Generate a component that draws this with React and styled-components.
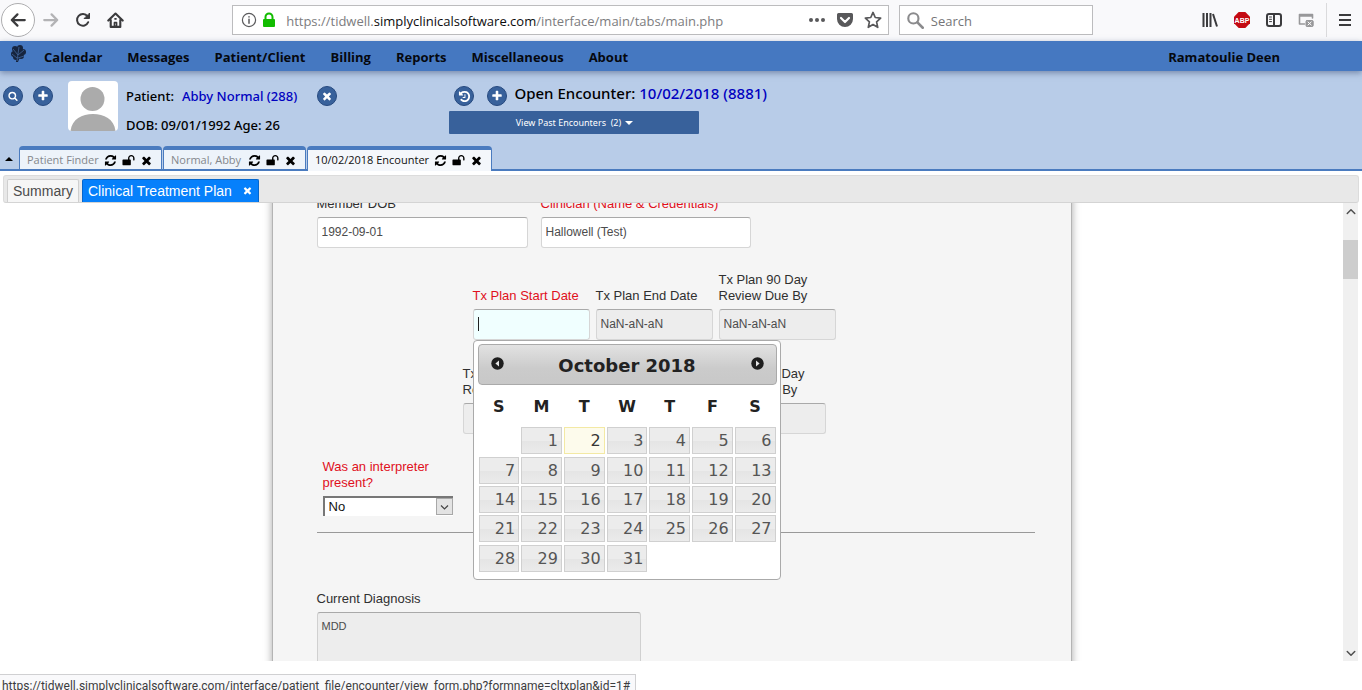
import React from "react";
import styled, { createGlobalStyle } from "styled-components";

const UI = `"Open Sans", "Noto Sans", sans-serif`;
const UI_MEDIUM = `"Noto Sans", "Open Sans", sans-serif`;
const UI_SMALL = `Roboto, "Open Sans", sans-serif`;
const ARIAL = `"Liberation Sans", Arial, sans-serif`;
const VERDANA = `"DejaVu Sans", Verdana, sans-serif`;

const Global = createGlobalStyle`
  * { box-sizing: border-box; }
  html, body { margin: 0; padding: 0; background: #fff; }
  button { margin: 0; padding: 0; border: 0; background: none; font: inherit; color: inherit; cursor: pointer; }
  a { text-decoration: none; }
  svg { display: block; }
`;

const Page = styled.div`
  display: flex;
  flex-direction: column;
  height: 100vh;
  overflow: hidden;
  font-family: ${UI};
`;

/* Browser toolbar */

const Toolbar = styled.div`
  flex: none;
  display: flex;
  align-items: center;
  height: 41px;
  padding: 0 1px 1px;
  background: #f9f9fb;
`;

const IconButton = styled.button`
  flex: none;
  display: flex;
  align-items: center;
  justify-content: center;
  width: 32px;
  height: 32px;
  color: ${(p) => p.$color || "#3b3b3d"};
`;

const BackButton = styled(IconButton)`
  width: 34px;
  height: 34px;
  border: 1px solid #aeaeb0;
  border-radius: 50%;
  background: #fff;
`;

const Spacer = styled.div`
  flex: 3 1 0;
`;

const UrlBox = styled.div`
  flex: 19 1 0;
  display: flex;
  align-items: center;
  gap: 5px;
  min-width: 0;
  height: 30px;
  padding: 0 6px 0 8px;
  border: 1px solid #bcbcbe;
  background: #fff;
`;

const UrlText = styled.div`
  flex: 1;
  margin-left: 5px;
  padding-top: 2px;
  min-width: 0;
  overflow: hidden;
  white-space: nowrap;
  font-size: 13px;
  line-height: 20px;
  color: #7c7c7e;
  outline: none;
  b { font-weight: 400; color: #0c0c0d; }
`;

const UrlActions = styled.div`
  display: flex;
  align-items: center;
  gap: 10px;
  color: #58585a;
`;

const SearchBox = styled.label`
  flex: none;
  display: flex;
  align-items: center;
  gap: 7px;
  width: 194px;
  height: 30px;
  margin-left: 10px;
  padding-left: 7px;
  border: 1px solid #bcbcbe;
  background: #fff;
  color: #8b8b8d;
  input {
    flex: 1;
    min-width: 0;
    padding: 2px 0 0;
    border: 0;
    outline: 0;
    background: none;
    font: 13px/20px ${UI};
    &::placeholder { color: #757577; opacity: 1; }
  }
`;

const MenuDivider = styled.div`
  width: 1px;
  height: 34px;
  margin: 0 2px 0 4px;
  background: #dadadc;
`;

/* Application menu */

const NavBar = styled.nav`
  flex: none;
  position: relative;
  display: flex;
  align-items: center;
  gap: 25px;
  height: 30px;
  padding: 2px 82px 0 10px;
  background: #4578c1;
  box-shadow: 0 2px 6px rgba(50, 70, 110, 0.5);
  font-size: 13px;
  font-weight: 700;
  line-height: 20px;
  color: #05080f;
`;

const NavLink = styled.a`
  color: inherit;
`;

const Brand = styled.a`
  margin: -6px -7px 0 0;
`;

const UserName = styled.button`
  margin-left: auto;
`;

/* Patient band */

const Band = styled.section`
  flex: none;
  display: flex;
  height: 75px;
  padding-top: 10px;
  background: #b8cce8;
  font-family: ${UI_MEDIUM};
  font-size: 13px;
  font-weight: 500;
  color: #000;
`;

const PatientBlock = styled.div`
  flex: none;
  display: flex;
  align-items: flex-start;
  width: 33%;
  padding: 0 0 0 3px;
`;

const RoundButton = styled.button`
  flex: none;
  display: flex;
  align-items: center;
  justify-content: center;
  width: 20px;
  height: 20px;
  border: 1px solid #26497f;
  border-radius: 50%;
  background: #38619b;
  color: #fff;
`;

const Finder = styled.div`
  display: flex;
  gap: 10px;
  margin: 5px 15px 0 0;
`;

const Avatar = styled.svg`
  flex: none;
  width: 50px;
  height: 50px;
  margin-right: 8px;
  border-radius: 4px;
`;

const PatientText = styled.div`
  display: flex;
  flex-direction: column;
  gap: 9px;
  padding-top: 5px;
  line-height: 20px;
  white-space: nowrap;
`;

const TextRow = styled.div`
  display: flex;
  align-items: center;
  height: 20px;
`;

const RecordLink = styled.a`
  margin: 0 20px 0 8px;
  color: #0000c0;
`;

const EncounterBlock = styled.div`
  display: flex;
  flex-direction: column;
  gap: 5px;
  width: 250px;
  padding-top: 5px;
  white-space: nowrap;
`;

const EncounterRow = styled(TextRow)`
  gap: 13px;
  padding-left: 5px;
  font-size: 15px;
`;

const EncounterTitle = styled.div`
  margin: -6px 0 0 -6px;
  a { color: #0000c0; }
`;

const PastButton = styled.button`
  display: flex;
  align-items: center;
  justify-content: center;
  gap: 4px;
  height: 23px;
  border-radius: 1px;
  background: #38619b;
  color: #fff;
  font-size: 9px;
  font-weight: 400;
`;

/* Work tabs */

const TabStrip = styled.div`
  flex: none;
  display: flex;
  gap: 1px;
  height: 25px;
  background: linear-gradient(#4a7bbf, #4a7bbf) 0 100% / 100% 2px no-repeat #b8cce8;
`;

const Collapse = styled.button`
  width: 18px;
  padding-left: 5px;
`;

const WorkTab = styled.div`
  display: flex;
  align-items: center;
  gap: 5px;
  min-width: 143px;
  height: ${(p) => (p.$active ? 25 : 23)}px;
  padding: 1px 8px ${(p) => (p.$active ? 2 : 0)}px 7px;
  border: 1px solid #4a7bbf;
  border-top-width: 4px;
  border-bottom: 0;
  border-radius: 4px 4px 0 0;
  background: ${(p) => (p.$active ? "#f4f7fb" : "#edf3fa")};
  font-size: 11px;
  line-height: 16px;
  color: #000;
  span { flex: 1; color: ${(p) => (p.$active ? "#111" : "#84878c")}; }
`;

/* Encounter tabs */

const FormTabs = styled.div`
  flex: none;
  display: flex;
  align-items: flex-end;
  gap: 3px;
  height: 28px;
  margin: 4px 3px 0;
  padding-left: 3px;
  border: 1px solid #dcdcdc;
  border-bottom-color: #d4d4d4;
  border-radius: 3px;
  background: #e8e8e8;
  font-family: ${ARIAL};
  font-size: 14px;
`;

const FormTab = styled.button`
  display: flex;
  align-items: center;
  gap: 10px;
  height: 23px;
  padding: 0 5px 1px;
  border: 1px solid ${(p) => (p.$active ? "#0566cc" : "#cfcfcf")};
  border-bottom: 0;
  border-radius: 2px 2px 0 0;
  background: ${(p) => (p.$active ? "#0680fb" : "#f6f6f6")};
  color: ${(p) => (p.$active ? "#fff" : "#4b4b4b")};
`;

/* Scrolled form */

const Viewport = styled.main`
  flex: 1;
  display: flex;
  min-height: 0;
  margin-right: 4px;
  overflow: hidden;
  font-family: ${ARIAL};
`;

const Canvas = styled.div`
  flex: 1;
  min-width: 0;
  overflow: hidden;
`;

const Sheet = styled.form`
  max-width: 800px;
  min-height: 600px;
  margin: -8px auto 0;
  padding: 0 36px 0 44px;
  border: 1px solid #b4b4b4;
  background: #f5f5f5;
  box-shadow: 0 0 8px rgba(0, 0, 0, 0.35);
`;

const FieldRow = styled.div`
  display: flex;
  align-items: flex-end;
  gap: ${(p) => p.$gap || 6}px;
  margin: ${(p) => p.$top || 0}px 0 0 ${(p) => p.$left || 0}px;
`;

const Field = styled.div`
  position: relative;
  display: flex;
  flex-direction: column;
  gap: 5px;
  width: ${(p) => p.$width || 117}px;
`;

const Label = styled.label`
  font-size: 13px;
  line-height: 16px;
  color: ${(p) => (p.$required ? "#e0101c" : "#303030")};
`;

const Input = styled.input`
  width: 100%;
  height: 31px;
  padding: 0 4px 2px;
  border: 1px solid #d6d6d6;
  border-top-color: #a9a9a9;
  border-radius: 3px;
  outline: 0;
  background: ${(p) => (p.$focus ? "#f0ffff" : p.readOnly ? "#ededed" : "#fff")};
  color: #4c4c4c;
  font: 12px/16px ${ARIAL};
`;

const Caret = styled.span`
  position: absolute;
  left: 5px;
  bottom: 9px;
  width: 1px;
  height: 14px;
  background: #222;
`;

const SelectWrap = styled.div`
  position: relative;
  width: 130px;
  select {
    appearance: none;
    width: 100%;
    height: 20px;
    padding: 0 20px 1px 4px;
    border: 0 solid #777;
    border-width: 2px 0 0 2px;
    border-radius: 0;
    background: #fff;
    color: #111;
    font: 13px/16px ${ARIAL};
  }
  svg {
    position: absolute;
    top: 2px;
    right: 0;
    pointer-events: none;
  }
`;

const Rule = styled.hr`
  height: 1px;
  margin: 16px 0 58px;
  border: 0;
  background: #999;
`;

const Notes = styled.textarea`
  width: 324px;
  height: 100px;
  padding: 6px 4px;
  border: 1px solid #d0d0d0;
  border-top-color: #a9a9a9;
  border-radius: 3px;
  background: #ededed;
  color: #4c4c4c;
  font: 11px/14px ${ARIAL};
  resize: none;
`;

const ScrollBar = styled.div`
  flex: none;
  display: flex;
  flex-direction: column;
  width: 15px;
  background: #f0f0f0;
`;

const ScrollArrow = styled.button`
  display: flex;
  align-items: center;
  justify-content: center;
  height: 17px;
  color: #505050;
`;

const ScrollThumb = styled.div`
  height: 39px;
  margin: 20px 0 auto;
  background: #cdcdcd;
`;

/* Date picker */

const Picker = styled.div`
  position: absolute;
  z-index: 5;
  top: 100%;
  left: 0;
  width: 308px;
  height: 240px;
  padding: 3px 3px 0 4px;
  border: 1px solid #aaa;
  border-radius: 4px;
  background: #fff;
  font-family: ${VERDANA};
  color: #222;
`;

const PickerHead = styled.div`
  display: flex;
  align-items: center;
  justify-content: space-between;
  height: 41px;
  padding: 1px 12px 0;
  border: 1px solid #aaa;
  border-radius: 4px;
  background: linear-gradient(#e2e2e2, #cbcbcb 60%, #c8c8c8);
  font-size: 18px;
  font-weight: 700;
  button { margin-bottom: 4px; }
`;

const Days = styled.table`
  width: 100%;
  height: 188px;
  border-collapse: collapse;
  table-layout: fixed;
  font-size: 16px;
  th {
    height: 41px;
    padding: 1px 0 0;
    font-weight: 700;
  }
  td { height: 29px; padding: 1px; }
`;

const Day = styled.a`
  display: block;
  height: 27px;
  padding-right: 3px;
  border: 1px solid ${(p) => (p.$today ? "#f3e9a4" : "#d0d0d0")};
  background: ${(p) => (p.$today ? "#fdfbec" : "linear-gradient(#ececec 50%, #e5e5e5 52%, #ebebeb)")};
  color: ${(p) => (p.$today ? "#363636" : "#555")};
  line-height: 26px;
  text-align: right;
`;

/* Link preview at the foot of the window */

const StatusBar = styled.div`
  flex: none;
  align-self: flex-start;
  height: 16px;
  margin-top: 13px;
  padding: 1px 5px 0 2px;
  overflow: hidden;
  border: 1px solid #d0d0d2;
  border-width: 1px 1px 0 0;
  background: #f9f9fb;
  color: #3c3c3e;
  font-family: ${UI_SMALL};
  font-size: 12px;
  line-height: 20px;
  white-space: nowrap;
`;

const FA = {
  times: "M1490 1322q0 40-28 68l-136 136q-28 28-68 28t-68-28l-294-294-294 294q-28 28-68 28t-68-28l-136-136q-28-28-28-68t28-68l294-294-294-294q-28-28-28-68t28-68l136-136q28-28 68-28t68 28l294 294 294-294q28-28 68-28t68 28l136 136q28 28 28 68t-28 68l-294 294 294 294q28 28 28 68z",
  plus: "M1600 736v192q0 40-28 68t-68 28h-416v416q0 40-28 68t-68 28h-192q-40 0-68-28t-28-68v-416h-416q-40 0-68-28t-28-68v-192q0-40 28-68t68-28h416v-416q0-40 28-68t68-28h192q40 0 68 28t28 68v416h416q40 0 68 28t28 68z",
  search: "M1216 832q0-185-131.5-316.5t-316.5-131.5-316.5 131.5-131.5 316.5 131.5 316.5 316.5 131.5 316.5-131.5 131.5-316.5zm512 832q0 52-38 90t-90 38q-54 0-90-38l-343-342q-179 124-399 124-143 0-273.5-55.5t-225-150-150-225-55.5-273.5 55.5-273.5 150-225 225-150 273.5-55.5 273.5 55.5 225 150 150 225 55.5 273.5q0 220-124 399l343 343q37 37 37 90z",
  refresh: "M1639 1056q0 5-1 7-64 268-268 434.5t-478 166.5q-146 0-282.5-55t-243.5-157l-129 129q-19 19-45 19t-45-19-19-45v-448q0-26 19-45t45-19h448q26 0 45 19t19 45-19 45l-137 137q71 66 161 102t187 36q134 0 250-65t186-179q11-17 53-117 8-23 30-23h192q13 0 22.5 9.5t9.5 22.5zm25-800v448q0 26-19 45t-45 19h-448q-26 0-45-19t-19-45 19-45l138-138q-148-137-349-137-134 0-250 65t-186 179q-11 17-53 117-8 23-30 23h-199q-13 0-22.5-9.5t-9.5-22.5v-7q65-268 270-434.5t480-166.5q146 0 284 55.5t245 156.5l130-129q19-19 45-19t45 19 19 45z",
  unlock: "M1728 576v256q0 26-19 45t-45 19h-64q-26 0-45-19t-19-45v-256q0-106-75-181t-181-75-181 75-75 181v192h96q40 0 68 28t28 68v576q0 40-28 68t-68 28h-960q-40 0-68-28t-28-68v-576q0-40 28-68t68-28h672v-192q0-185 131.5-316.5t316.5-131.5 316.5 131.5 131.5 316.5z",
  history: "M1664 896q0 156-61 298t-164 245-245 164-298 61q-172 0-327-72.5t-264-204.5q-7-10-6.5-22.5t8.5-20.5l137-138q10-9 25-9 16 2 23 12 73 95 179 147t225 52q104 0 198.5-40.5t163.5-109.5 109.5-163.5 40.5-198.5-40.5-198.5-109.5-163.5-163.5-109.5-198.5-40.5q-98 0-188 35.5t-160 101.5l137 138q31 30 14 69-17 40-59 40h-448q-26 0-45-19t-19-45v-448q0-42 40-59 39-17 69 14l130 129q107-101 244.5-156.5t284.5-55.5q156 0 298 61t245 164 164 245 61 298zm-640-288v448q0 14-9 23t-23 9h-320q-14 0-23-9t-9-23v-64q0-14 9-23t23-9h224v-352q0-14 9-23t23-9h64q14 0 23 9t9 23z",
};

const Glyph = ({ name, size = 12 }) => (
  <svg width={size} height={size} viewBox="0 0 1792 1792" fill="currentColor" aria-hidden="true">
    <path d={FA[name]} />
  </svg>
);

const Line = ({ size = 16, width = 2, children, ...rest }) => (
  <svg width={size} height={size} viewBox="0 0 16 16" fill="none" stroke="currentColor" strokeWidth={width}
    strokeLinecap="round" strokeLinejoin="round" aria-hidden="true" {...rest}>
    {children}
  </svg>
);

const Tab = ({ title, active }) => (
  <WorkTab $active={active}>
    <span>{title}</span>
    <button aria-label={`Refresh ${title}`}><Glyph name="refresh" size={13} /></button>
    <button aria-label={`Unlock ${title}`}><Glyph name="unlock" size={13} /></button>
    <button aria-label={`Close ${title}`}><Glyph name="times" size={13} /></button>
  </WorkTab>
);

const DateField = ({ id, label, name, value, required, focus, children }) => (
  <Field>
    {label && <Label htmlFor={id} $required={required}>{label}</Label>}
    <Input id={id} aria-label={name} defaultValue={value} readOnly={!focus} $focus={focus} />
    {children}
  </Field>
);

const WEEKS = [
  [null, 1, 2, 3, 4, 5, 6],
  [7, 8, 9, 10, 11, 12, 13],
  [14, 15, 16, 17, 18, 19, 20],
  [21, 22, 23, 24, 25, 26, 27],
  [28, 29, 30, 31, null, null, null],
];

const DatePicker = () => (
  <Picker>
    <PickerHead>
      <button type="button" aria-label="Previous month">
        <svg width="13" height="13" viewBox="0 0 13 13"><circle cx="6.5" cy="6.5" r="6.2" fill="#1e1e1e" /><path d="M8 3.4v6.2L4.4 6.5z" fill="#e4e4e4" /></svg>
      </button>
      <span>October 2018</span>
      <button type="button" aria-label="Next month">
        <svg width="13" height="13" viewBox="0 0 13 13"><circle cx="6.5" cy="6.5" r="6.2" fill="#1e1e1e" /><path d="M5 3.4v6.2l3.6-3.1z" fill="#e4e4e4" /></svg>
      </button>
    </PickerHead>
    <Days>
      <thead>
        <tr>{["S", "M", "T", "W", "T", "F", "S"].map((d, i) => <th key={i} scope="col">{d}</th>)}</tr>
      </thead>
      <tbody>
        {WEEKS.map((week, i) => (
          <tr key={i}>
            {week.map((day, j) => <td key={j}>{day && <Day href="#" $today={day === 2}>{day}</Day>}</td>)}
          </tr>
        ))}
      </tbody>
    </Days>
  </Picker>
);

export default function App() {
  return (
    <Page>
      <Global />
      <Toolbar>
        <BackButton aria-label="Back"><Line size={18}><path d="M14 8H2.500M7.500 3L2.500 8l5 5" /></Line></BackButton>
        <IconButton aria-label="Forward" $color="#b3b3b5"><Line size={18}><path d="M2 8h11.500M8.500 3l5 5-5 5" /></Line></IconButton>
        <IconButton aria-label="Reload">
          <Line><path d="M13.200 10.200A5.800 5.800 0 1 1 12.500 4.400" /><path d="M14.500 1.500v5h-5z" fill="currentColor" strokeWidth="1" /></Line>
        </IconButton>
        <IconButton aria-label="Home">
          <Line size={17}><path d="M1.200 8L8 1.500 14.800 8M3.500 7.500V14h9V7.500" /><path d="M7 13.500V10h2v3.500zM7.500 6.500h1" strokeWidth="1.500" /></Line>
        </IconButton>
        <Spacer />
        <UrlBox>
          <Line width={1.2} style={{ color: "#5a5a5c" }}><circle cx="8" cy="8" r="6.600" /><path d="M8 7.300v4M8 4.800v.2" strokeWidth="1.500" /></Line>
          <svg width="14" height="16" viewBox="0 0 14 16" aria-hidden="true">
            <rect x="1" y="7" width="12" height="8" rx="1" fill="#12bc00" />
            <path d="M3.500 8V5a3.500 3.500 0 0 1 7 0v3" fill="none" stroke="#12bc00" strokeWidth="2" />
          </svg>
          <UrlText role="textbox" aria-label="Address" contentEditable suppressContentEditableWarning spellCheck={false}>
            https://tidwell.<b>simplyclinicalsoftware.com</b>/interface/main/tabs/main.php
          </UrlText>
          <UrlActions>
            <button aria-label="Page actions">
              <svg width="18" height="16" viewBox="0 0 18 16" fill="currentColor"><circle cx="3" cy="8" r="2" /><circle cx="9" cy="8" r="2" /><circle cx="15" cy="8" r="2" /></svg>
            </button>
            <button aria-label="Save to Pocket">
              <svg width="18" height="16" viewBox="0 0 18 16"><path d="M2.500 1h13A1.500 1.500 0 0 1 17 2.500V7a8 8 0 0 1-16 0V2.500A1.500 1.500 0 0 1 2.500 1z" fill="#58585a" /><path d="M5 6l4 4 4-4" fill="none" stroke="#fff" strokeWidth="2.200" strokeLinecap="round" strokeLinejoin="round" /></svg>
            </button>
            <button aria-label="Bookmark">
              <Line size={18} width={1.5}><path d="M8 1.300l2 4.500 4.800.5-3.600 3.300 1 4.900L8 12l-4.200 2.500 1-4.900L1.200 6.300 6 5.800z" /></Line>
            </button>
          </UrlActions>
        </UrlBox>
        <SearchBox>
          <Line size={17}><circle cx="6" cy="6" r="4.800" /><path d="M9.800 9.800l5 5" strokeWidth="2.400" /></Line>
          <input type="text" placeholder="Search" aria-label="Search" />
        </SearchBox>
        <Spacer />
        <IconButton aria-label="Library">
          <Line width={2} strokeLinecap="butt"><path d="M1.500 1v14M5 1v14M8.500 1v14M11 2l4 12.500" /></Line>
        </IconButton>
        <IconButton aria-label="Adblock Plus">
          <svg width="16" height="16" viewBox="0 0 16 16">
            <path d="M4.700 0h6.600L16 4.700v6.600L11.300 16H4.700L0 11.300V4.700z" fill="#c40a12" />
            <text x="8" y="10.600" textAnchor="middle" fontSize="7" fontWeight="700" fontFamily="Liberation Sans, sans-serif" fill="#fff">ABP</text>
          </svg>
        </IconButton>
        <IconButton aria-label="Sidebars">
          <Line><rect x="1" y="2" width="14" height="12" rx="2" /><path d="M8 2v12" /><path d="M3.500 5h2M3.500 7.300h2M3.500 9.600h2" strokeWidth="1" /></Line>
        </IconButton>
        <IconButton aria-label="Clear session" $color="#98989a">
          <Line width={1.6}><path d="M6.500 12H1.500V2.500h13V6M1.500 4h13" /><rect x="8" y="8.500" width="7.200" height="6" rx="1" fill="currentColor" strokeWidth="1" /><path d="M10 10l3.200 3M13.200 10L10 13" stroke="#fff" strokeWidth="1" /></Line>
        </IconButton>
        <MenuDivider />
        <IconButton aria-label="Menu"><Line strokeLinecap="butt"><path d="M2 3h12M2 8h12M2 13h12" /></Line></IconButton>
      </Toolbar>

      <NavBar>
        <Brand href="#" aria-label="Home">
          <svg width="16" height="20" viewBox="0 0 16 20">
            <g fill="#16253f">
              <circle cx="5" cy="5" r="3" /><circle cx="10" cy="4" r="3" /><circle cx="13" cy="8" r="3" />
              <circle cx="4" cy="10" r="3" /><circle cx="8" cy="9" r="4" /><circle cx="11" cy="12" r="3" /><circle cx="6" cy="13" r="3" /><path d="M6 11l0 7 2 0 2-5z" />
            </g>
            <path d="M7 17L9 3M8 11L3 5M8 11l6-5M7 14L2 10M8 14l6-2" stroke="#40659c" strokeWidth=".8" fill="none" />
          </svg>
        </Brand>
        {["Calendar", "Messages", "Patient/Client", "Billing", "Reports", "Miscellaneous", "About"].map((t) => (
          <NavLink key={t} href="#">{t}</NavLink>
        ))}
        <UserName>Ramatoulie Deen</UserName>
      </NavBar>

      <Band>
        <PatientBlock>
          <Finder>
            <RoundButton aria-label="Find patient"><Glyph name="search" size={10} /></RoundButton>
            <RoundButton aria-label="New patient"><Glyph name="plus" size={12} /></RoundButton>
          </Finder>
          <Avatar viewBox="0 0 50 50" aria-hidden="true">
            <rect width="50" height="50" fill="#fff" />
            <circle cx="24.500" cy="18" r="12" fill="#ababab" />
            <path d="M2.500 50C4 38 14 33 25 33s21 5 22.500 17z" fill="#ababab" />
          </Avatar>
          <PatientText>
            <TextRow>
              Patient: <RecordLink href="#">Abby Normal (288)</RecordLink>
              <RoundButton aria-label="Clear patient"><Glyph name="times" size={12} /></RoundButton>
            </TextRow>
            <TextRow>DOB: 09/01/1992 Age: 26</TextRow>
          </PatientText>
        </PatientBlock>
        <EncounterBlock>
          <EncounterRow>
            <RoundButton aria-label="Encounter history"><Glyph name="history" size={13} /></RoundButton>
            <RoundButton aria-label="New encounter"><Glyph name="plus" size={12} /></RoundButton>
            <EncounterTitle>Open Encounter: <a href="#">10/02/2018 (8881)</a></EncounterTitle>
          </EncounterRow>
          <PastButton>
            <span>View Past Encounters&nbsp; (2)</span>
            <svg width="8" height="4" viewBox="0 0 8 4"><path d="M0 0h8L4 4z" fill="#fff" /></svg>
          </PastButton>
        </EncounterBlock>
      </Band>

      <TabStrip>
        <Collapse aria-label="Collapse">
          <svg width="8" height="4" viewBox="0 0 8 4"><path d="M0 4h8L4 0z" /></svg>
        </Collapse>
        <Tab title="Patient Finder" />
        <Tab title="Normal, Abby" />
        <Tab title="10/02/2018 Encounter" active />
      </TabStrip>

      <FormTabs>
        <FormTab>Summary</FormTab>
        <FormTab $active>Clinical Treatment Plan <Glyph name="times" size={11} /></FormTab>
      </FormTabs>

      <Viewport>
        <Canvas>
          <Sheet>
            <FieldRow $gap={13}>
              <Field $width={211}>
                <Label htmlFor="dob">Member DOB</Label>
                <Input id="dob" defaultValue="1992-09-01" />
              </Field>
              <Field $width={210}>
                <Label htmlFor="clinician" $required>Clinician (Name &amp; Credentials)</Label>
                <Input id="clinician" defaultValue="Hallowell (Test)" />
              </Field>
            </FieldRow>

            <FieldRow $top={24} $left={156}>
              <DateField id="start" label="Tx Plan Start Date" required focus value="">
                <Caret />
                <DatePicker />
              </DateField>
              <DateField id="end" label="Tx Plan End Date" value="NaN-aN-aN" />
              <DateField id="review90" label="Tx Plan 90 Day Review Due By" value="NaN-aN-aN" />
            </FieldRow>

            <FieldRow $top={26} $left={146}>
              <DateField id="review180" label="Tx Plan 180 Day Review Due By" value="" />
              <DateField id="review270" name="Review date" value="" />
              <DateField id="review360" label="Tx Plan 360 Day Review Due By" value="" />
            </FieldRow>

            <FieldRow $top={25} $left={6}>
              <Field $width={130}>
                <Label htmlFor="interpreter" $required>Was an interpreter present?</Label>
                <SelectWrap>
                  <select id="interpreter" defaultValue="No"><option>No</option><option>Yes</option></select>
                  <svg width="17" height="17" viewBox="0 0 17 17">
                    <rect x=".5" y=".5" width="16" height="16" fill="#e3e3e3" stroke="#a8a8a8" />
                    <path d="M5 7.500l3.500 3.500L12 7.500" fill="none" stroke="#444" strokeWidth="1.200" />
                  </svg>
                </SelectWrap>
              </Field>
            </FieldRow>

            <Rule />

            <Field $width={324}>
              <Label htmlFor="diagnosis">Current Diagnosis</Label>
              <Notes id="diagnosis" defaultValue="MDD" readOnly />
            </Field>
          </Sheet>
        </Canvas>
        <ScrollBar>
          <ScrollArrow aria-label="Scroll up"><Line size={12}><path d="M3 10l5-5 5 5" /></Line></ScrollArrow>
          <ScrollThumb />
          <ScrollArrow aria-label="Scroll down"><Line size={12}><path d="M3 6l5 5 5-5" /></Line></ScrollArrow>
        </ScrollBar>
      </Viewport>

      <StatusBar>
        https://tidwell.simplyclinicalsoftware.com/interface/patient_file/encounter/view_form.php?formname=cltxplan&amp;id=1#
      </StatusBar>
    </Page>
  );
}
